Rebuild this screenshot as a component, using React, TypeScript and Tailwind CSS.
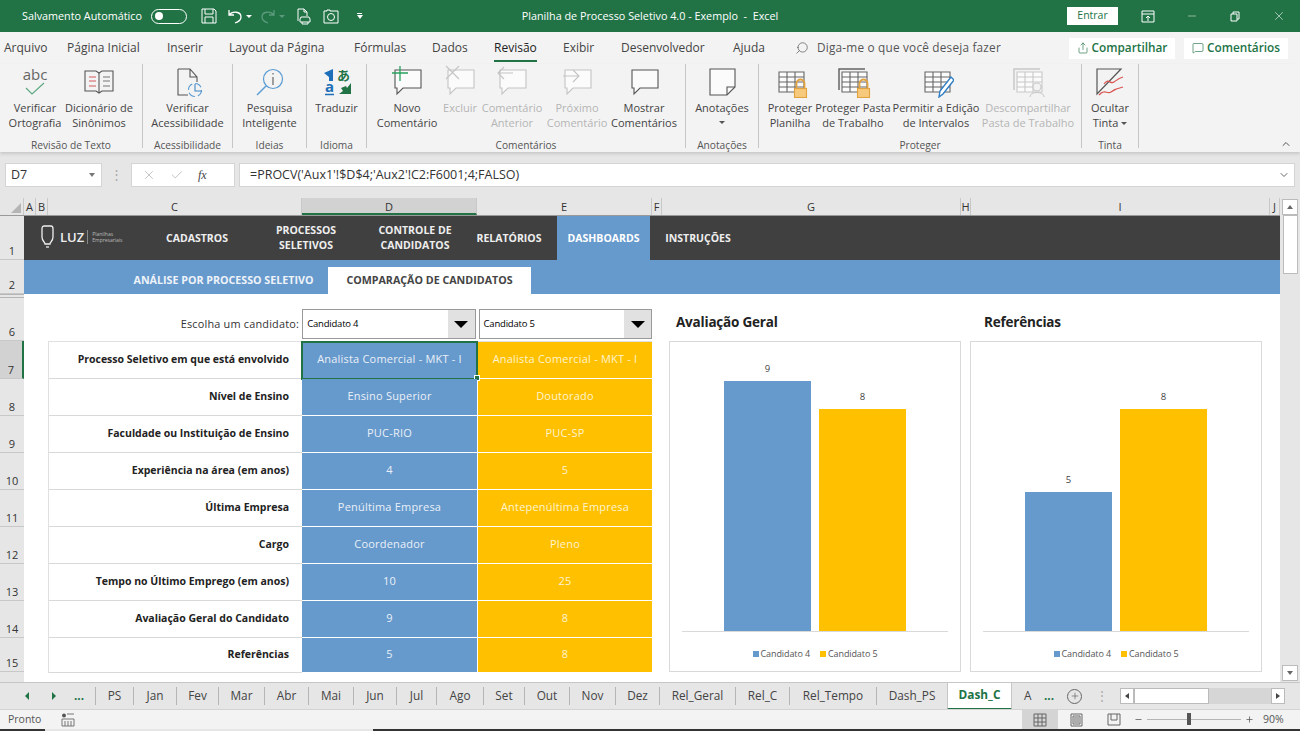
import { Search, Share, MessageSquare, X, Check, ChevronDown, ChevronUp, Minus, Plus } from "lucide-react";

const font = "font-['Open_Sans','Noto_Sans',sans-serif]";

// Title bar icons
function SaveIcon() {
  return (
    <svg width="16" height="16" viewBox="0 0 16 16" fill="none" stroke="#fff" strokeWidth="1"><path d="M1 1h12l2 2v12H1zM4 1v5h8V1M4 15v-6h8v6" /></svg>
  );
}

function UndoIcon({ color }: { color: string }) {
  return (
    <svg width="14" height="16" viewBox="0 0 14 16" fill="none" stroke={color} strokeWidth="1.3"><path d="M1 2v5h5M1 7c3-4 12-4 12 2 0 3-3 5-6 6" /></svg>
  );
}

function PreviewIcon() {
  return (
    <svg width="14" height="17" viewBox="0 0 14 17" fill="none" stroke="#fff" strokeWidth="1"><path d="M1 13V1h6l3 3v4M7 1v3h3M4 9h8l1 2v3H3v-3zM5 14v2h6v-2" /></svg>
  );
}

function CameraIcon() {
  return (
    <svg width="16" height="15" viewBox="0 0 16 15" fill="none" stroke="#fff" strokeWidth="1"><path d="M1 2h3V1h3v1h8v12H1z" /><circle cx="8" cy="8" r="3.500" /></svg>
  );
}

// Ribbon icons, all on the same 36x34 box
function AbcIcon() {
  return (
    <svg width="36" height="34" viewBox="0 0 36 34" fill="none">
      <text x="18" y="16" textAnchor="middle" fontSize="15" fill="#666" fontFamily="'Open Sans'">abc</text>
      <path d="M9 24l6 6L27 19" stroke="#5aa77f" strokeWidth="1.100" />
    </svg>
  );
}

function BookIcon() {
  return (
    <svg width="36" height="34" viewBox="0 0 36 34" fill="none" stroke="#555" strokeWidth="1.100">
      <path d="M4 7h11l3 2 3-2h11v20H21l-3 2-3-2H4z" />
      <path d="M18 9v20" />
      <path d="M8 13h7M8 17h7M8 22h7" stroke="#d15a5a" />
      <path d="M22 13h7M22 17h7M22 22h7" stroke="#777" />
    </svg>
  );
}

function AccessIcon() {
  return (
    <svg width="36" height="34" viewBox="0 0 36 34" fill="none" strokeWidth="1.100">
      <path d="M8 5h12l7 8v5M8 5v26h10M20 5v8h7" stroke="#555" />
      <circle cx="25" cy="26" r="6.500" stroke="#5a9bd4" strokeDasharray="7 3" />
      <path d="M25 20v7h7" stroke="#3f87c5" />
    </svg>
  );
}

function SmartIcon() {
  return (
    <svg width="36" height="34" viewBox="0 0 36 34" fill="none" stroke="#5a9bd4" strokeWidth="1.200">
      <circle cx="21" cy="15" r="9.500" />
      <path d="M14 22L5 31" strokeWidth="1.400" />
      <path d="M21 13v8M21 9v1.500" stroke="#666" />
    </svg>
  );
}

function TranslateIcon() {
  return (
    <svg width="36" height="34" viewBox="0 0 36 34">
      <path d="M5 9l9-4v12h-4v-4z" fill="#1c6fb8" />
      <text x="18" y="16" fontSize="13" fill="#217346" fontWeight="700" fontFamily="'Noto Sans CJK JP'">あ</text>
      <text x="6" y="28" fontSize="15" fontWeight="700" fill="#1c6fb8" fontFamily="'Open Sans'">a</text>
      <path d="M6 30.500h9" stroke="#1c6fb8" strokeWidth="1.500" />
      <path d="M32 19v11H20l4-3-2-3 5-2 1 2z" fill="#217346" />
    </svg>
  );
}

function BubbleIcon({ kind }: { kind: "new" | "del" | "prev" | "next" | "show" }) {
  const color = kind === "new" || kind === "show" ? "#555" : "#c4c4c4";
  return (
    <svg width="36" height="34" viewBox="0 0 36 34" fill="none" strokeWidth="1.100">
      <path d="M6 6h26v18H14l-6 6v-6H6z" stroke={color} fill="#fbfbfb" />
      {kind === "new" && <path d="M11 2v15M3 9h16" stroke="#27a35f" strokeWidth="1.300" />}
      {kind === "del" && <path d="M4 2l13 13M17 2L4 15" stroke="#c4c4c4" fill="none" />}
      {kind === "prev" && <path d="M19 9H5M10 3L4 9l6 6" stroke="#c4c4c4" />}
      {kind === "next" && <path d="M4 12h15M14 6l6 6-6 6" stroke="#c4c4c4" />}
    </svg>
  );
}

function NoteIcon() {
  return (
    <svg width="36" height="34" viewBox="0 0 36 34" fill="none" stroke="#555" strokeWidth="1.100">
      <path d="M6 5h25v18l-8 8H6z" fill="#fbfbfb" />
      <path d="M31 23h-8v8" />
    </svg>
  );
}

function SheetIcon({ lock, pen, user, stack }: { lock?: boolean; pen?: boolean; user?: boolean; stack?: boolean }) {
  const c = user ? "#c8c8c8" : "#666";
  return (
    <svg width="36" height="34" viewBox="0 0 36 34" fill="none" strokeWidth="1.100">
      {stack && <path d="M4 26V5h26" stroke={c} strokeWidth="1.500" />}
      <path d="M7 8h25v20H7z" stroke={c} fill="#fbfbfb" />
      <path d="M7 13h25M7 18h25M7 23h25M15 8v20M23 8v20" stroke={c} />
      {lock && (
        <g>
          <path d="M24.500 24v-4.500a4 4 0 018 0V24" stroke="#e2a33f" strokeWidth="1.800" />
          <rect x="22.500" y="24.500" width="12" height="9" fill="#f7c97c" stroke="#e2a33f" />
        </g>
      )}
      {pen && <path d="M21 33l1-6L33 13l3 3-11 14z" fill="#fff" stroke="#2f7fc7" strokeWidth="1.400" />}
      {user && (
        <g stroke="#c8c8c8" fill="#f3f3f3">
          <circle cx="27" cy="23" r="4" />
          <path d="M20 33c0-6 14-6 14 0" />
        </g>
      )}
    </svg>
  );
}

function InkIcon() {
  return (
    <svg width="36" height="34" viewBox="0 0 36 34" fill="none" strokeWidth="1.200">
      <path d="M5 5h24L5 30z" stroke="#555" />
      <path d="M12 20c5-7 6 1 10-2s5-4 9-5" stroke="#d9534f" />
      <path d="M7 31c6-7 8 0 12-3s7-4 12-5" stroke="#d9534f" />
    </svg>
  );
}

function Caret({ className }: { className?: string }) {
  return <span className={`inline-block h-0 w-0 border-x-[3px] border-t-[3px] border-x-transparent border-t-[#555] ${className ?? ""}`} />;
}

function RibbonButton({ icon, lines, w, off, caret }: { icon: React.ReactNode; lines: string[]; w: string; off?: boolean; caret?: "below" | "inline" }) {
  return (
    <div className={`${w} flex shrink-0 flex-col items-center`}>
      <div className="flex h-[34px] items-center justify-center">{icon}</div>
      <div className={`mt-[2px] text-center text-[11px] leading-[15px] whitespace-nowrap ${off ? "text-[#b5b5b5]" : "text-[#444]"}`}>
        {lines.map((l, i) => (
          <div key={l}>
            {l}
            {caret === "inline" && i === lines.length - 1 && <Caret className="mb-[2px] ml-[3px]" />}
          </div>
        ))}
        {caret === "below" && <div className="flex h-[15px] items-center justify-center"><Caret /></div>}
      </div>
    </div>
  );
}

function RibbonGroup({ label, w, children, pl }: { label: string; w: string; children: React.ReactNode; pl?: string }) {
  return (
    <div className={`${w} flex h-[84px] shrink-0 flex-col border-r border-[#c6c6c6]`}>
      <div className={`flex h-[74px] shrink-0 ${pl ?? "justify-center"}`}>{children}</div>
      <div className="text-center text-[10.200px] leading-[14px] text-[#555]">{label}</div>
    </div>
  );
}

const menuTabs = [
  { t: "Arquivo", w: "w-[63px]" },
  { t: "Página Inicial", w: "w-[100px]" },
  { t: "Inserir", w: "w-[62px]" },
  { t: "Layout da Página", w: "w-[125px]" },
  { t: "Fórmulas", w: "w-[78px]" },
  { t: "Dados", w: "w-[62px]" },
  { t: "Revisão", w: "w-[69px]", active: true },
  { t: "Exibir", w: "w-[58px]" },
  { t: "Desenvolvedor", w: "w-[112px]" },
  { t: "Ajuda", w: "w-[62px]" },
];

const columns = [
  { t: "A", w: "w-[12px]" },
  { t: "B", w: "w-[12px]" },
  { t: "C", w: "w-[254px]" },
  { t: "D", w: "w-[175px]", active: true },
  { t: "E", w: "w-[175px]" },
  { t: "F", w: "w-[10px]" },
  { t: "G", w: "w-[299px]" },
  { t: "H", w: "w-[10px]" },
  { t: "I", w: "w-[299px]" },
  { t: "J", w: "w-[10px]" },
];

const navItems = [
  { lines: ["CADASTROS"], w: "w-[106px]" },
  { lines: ["PROCESSOS", "SELETIVOS"], w: "w-[112px]" },
  { lines: ["CONTROLE DE", "CANDIDATOS"], w: "w-[106px]" },
  { lines: ["RELATÓRIOS"], w: "w-[82px]" },
  { lines: ["DASHBOARDS"], w: "ml-[7px] w-[93px]", active: true },
  { lines: ["INSTRUÇÕES"], w: "w-[96px]" },
];

const rows = [
  { label: "Processo Seletivo em que está envolvido", a: "Analista Comercial - MKT - I", b: "Analista Comercial - MKT - I", h: "h-[37px]", sel: true },
  { label: "Nível de Ensino", a: "Ensino Superior", b: "Doutorado", h: "h-[37px]" },
  { label: "Faculdade ou Instituição de Ensino", a: "PUC-RIO", b: "PUC-SP", h: "h-[37px]" },
  { label: "Experiência na área (em anos)", a: "4", b: "5", h: "h-[37px]" },
  { label: "Última Empresa", a: "Penúltima Empresa", b: "Antepenúltima Empresa", h: "h-[37px]" },
  { label: "Cargo", a: "Coordenador", b: "Pleno", h: "h-[37px]" },
  { label: "Tempo no Último Emprego (em anos)", a: "10", b: "25", h: "h-[37px]" },
  { label: "Avaliação Geral do Candidato", a: "9", b: "8", h: "h-[37px]" },
  { label: "Referências", a: "5", b: "8", h: "h-[35px]" },
];

const rowHeaders = [
  { t: "7", h: "h-[38px]", active: true },
  { t: "8", h: "h-[37px]" },
  { t: "9", h: "h-[37px]" },
  { t: "10", h: "h-[37px]" },
  { t: "11", h: "h-[37px]" },
  { t: "12", h: "h-[37px]" },
  { t: "13", h: "h-[37px]" },
  { t: "14", h: "h-[37px]" },
  { t: "15", h: "h-[34px]" },
];

const sheetTabs = [
  { t: "PS", w: "w-[38px]" },
  { t: "Jan", w: "w-[43px]" },
  { t: "Fev", w: "w-[42px]" },
  { t: "Mar", w: "w-[46px]" },
  { t: "Abr", w: "w-[44px]" },
  { t: "Mai", w: "w-[45px]" },
  { t: "Jun", w: "w-[43px]" },
  { t: "Jul", w: "w-[40px]" },
  { t: "Ago", w: "w-[47px]" },
  { t: "Set", w: "w-[41px]" },
  { t: "Out", w: "w-[45px]" },
  { t: "Nov", w: "w-[46px]" },
  { t: "Dez", w: "w-[44px]" },
  { t: "Rel_Geral", w: "w-[76px]" },
  { t: "Rel_C", w: "w-[54px]" },
  { t: "Rel_Tempo", w: "w-[87px]" },
  { t: "Dash_PS", w: "w-[71px]" },
];

function RowHead({ t, h, active }: { t: string; h: string; active?: boolean }) {
  return (
    <div className={`${h} flex items-end justify-center border-b border-[#c8c8c8] text-[11px] leading-[16px] text-[#333] ${active ? "border-r-2 border-r-[#217346] bg-[#d2d2d2]" : ""}`}>
      {t}
    </div>
  );
}

function Dropdown({ value }: { value: string }) {
  return (
    <div className="flex h-[30px] w-[174px] items-center border border-[#999] bg-white pl-[4px] text-[9.500px] tracking-[-0.2px] text-black">
      <span className="flex-1">{value}</span>
      <div className="flex h-full w-[27px] items-center justify-center bg-[#e1e1e1]">
        <div className="h-0 w-0 border-x-[7px] border-t-[7px] border-x-transparent border-t-black" />
      </div>
    </div>
  );
}

function Chart({ title, values, pl }: { title: string; values: number[]; pl: string }) {
  const colors = ["bg-[#6699cc]", "bg-[#ffc000]"];
  return (
    <div className="flex w-[292px] flex-col">
      <div className={`flex h-[47px] items-center pt-[9px] ${pl} text-[13.500px] font-bold tracking-[-0.2px] text-[#222]`}>{title}</div>
      <div className="flex h-[331px] flex-col border border-[#d9d9d9]">
        <div className="mx-[12px] flex flex-1 items-end justify-center gap-[8px] border-b border-[#d9d9d9]">
          {values.map((v, i) => (
            <div key={i} className="flex w-[87px] flex-col items-center">
              <span className="mb-[6px] text-[9.500px] leading-[12px] text-[#444]">{v}</span>
              <div className={`w-full ${colors[i]}`} style={{ height: Math.round(v * 27.8) }} />
            </div>
          ))}
        </div>
        <div className="flex h-[39px] items-center justify-center gap-[10px] pt-[5px] text-[9px] tracking-[-0.1px] text-[#555]">
          <span className="flex items-center gap-[2px]"><i className="h-[6px] w-[6px] bg-[#6699cc]" />Candidato 4</span>
          <span className="flex items-center gap-[2px]"><i className="h-[6px] w-[6px] bg-[#ffc000]" />Candidato 5</span>
        </div>
      </div>
    </div>
  );
}

export default function App() {
  return (
    <div className={`${font} flex h-[731px] w-[1300px] flex-col overflow-hidden bg-[#e6e6e6]`}>
      {/* Title bar */}
      <div className="flex h-[32px] shrink-0 items-center bg-[#217346] text-white">
        <div className="flex flex-1 basis-0 items-center pl-[22px] text-[10.800px]">
          <span className="whitespace-nowrap">Salvamento Automático</span>
          <div className="ml-[9px] flex h-[15px] w-[36px] shrink-0 items-center rounded-full border border-white pl-[3px]">
            <div className="h-[8px] w-[8px] rounded-full bg-white" />
          </div>
          <div className="ml-[14px]"><SaveIcon /></div>
          <div className="ml-[11px]"><UndoIcon color="#fff" /></div>
          <div className="ml-[4px] h-0 w-0 border-x-[3px] border-t-[3px] border-x-transparent border-t-white" />
          <div className="ml-[9px] -scale-x-100"><UndoIcon color="#5c9a7c" /></div>
          <div className="ml-[4px] h-0 w-0 border-x-[3px] border-t-[3px] border-x-transparent border-t-[#5c9a7c]" />
          <div className="ml-[12px]"><PreviewIcon /></div>
          <div className="ml-[12px]"><CameraIcon /></div>
          <div className="ml-[18px] flex flex-col items-center">
            <div className="mb-[1px] h-[1px] w-[5px] bg-white" />
            <div className="h-0 w-0 border-x-[3px] border-t-[4px] border-x-transparent border-t-white" />
          </div>
        </div>
        <div className="mr-[8px] text-[10.800px] whitespace-nowrap">Planilha de Processo Seletivo 4.0 - Exemplo&nbsp; -&nbsp; Excel</div>
        <div className="flex flex-1 basis-0 items-center justify-end pr-[14px]">
          <div className="flex h-[18px] w-[51px] items-center justify-center bg-white text-[10.500px] text-[#217346]">Entrar</div>
          <svg className="ml-[23px]" width="14" height="13" viewBox="0 0 14 13" fill="none" stroke="#fff"><path d="M1 1h12v11H1zM1 4h12M7 11V6M5 8l2-2 2 2" /></svg>
          <Minus className="ml-[31px]" size={12} strokeWidth={1} />
          <svg className="ml-[32px]" width="10" height="11" viewBox="0 0 10 11" fill="none" stroke="#fff"><path d="M1 3h6v7H1zM3 3V1h6v7H7" /></svg>
          <X className="ml-[32px]" size={14} strokeWidth={1} />
        </div>
      </div>

      {/* Menu tabs */}
      <div className="flex h-[32px] shrink-0 items-center bg-[#f3f3f3] pl-[4px] text-[12px] text-[#444]">
        {menuTabs.map((m) => (
          <div key={m.t} className={`${m.w} shrink-0 whitespace-nowrap`}>
            <span className={`relative inline-block leading-[32px] ${m.active ? "text-[#222]" : ""}`}>
              {m.t}
              {m.active && <span className="absolute bottom-[2px] left-0 h-[2px] w-full bg-[#217346]" />}
            </span>
          </div>
        ))}
        <Search className="-scale-x-100 text-[#555]" size={14} strokeWidth={1.2} />
        <span className="ml-[8px] whitespace-nowrap text-[11.800px] tracking-[0.2px] text-[#555]">Diga-me o que você deseja fazer</span>
        <div className="ml-auto flex items-center gap-[9px] pr-[12px] text-[#217346]">
          <div className="flex h-[21px] w-[106px] items-center justify-center gap-[3px] bg-white text-[11.800px] font-semibold">
            <Share size={12} strokeWidth={1.3} />Compartilhar
          </div>
          <div className="flex h-[21px] w-[104px] items-center justify-center gap-[3px] bg-white text-[11.800px] font-semibold">
            <MessageSquare size={12} strokeWidth={1.3} />Comentários
          </div>
        </div>
      </div>

      {/* Ribbon */}
      <div className="flex h-[88px] shrink-0 bg-[#f3f3f3] shadow-[0_2px_3px_#c8c8c8]">
        <RibbonGroup label="Revisão de Texto" w="w-[143px]" pl="pl-[4px]">
          <RibbonButton w="w-[62px]" icon={<AbcIcon />} lines={["Verificar", "Ortografia"]} />
          <RibbonButton w="w-[66px]" icon={<BookIcon />} lines={["Dicionário de", "Sinônimos"]} />
        </RibbonGroup>
        <RibbonGroup label="Acessibilidade" w="w-[90px]">
          <RibbonButton w="w-[80px]" icon={<AccessIcon />} lines={["Verificar", "Acessibilidade"]} />
        </RibbonGroup>
        <RibbonGroup label="Ideias" w="w-[74px]">
          <RibbonButton w="w-[70px]" icon={<SmartIcon />} lines={["Pesquisa", "Inteligente"]} />
        </RibbonGroup>
        <RibbonGroup label="Idioma" w="w-[60px]">
          <RibbonButton w="w-[56px]" icon={<TranslateIcon />} lines={["Traduzir"]} />
        </RibbonGroup>
        <RibbonGroup label="Comentários" w="w-[319px]" pl="pl-[5px]">
          <RibbonButton w="w-[70px]" icon={<BubbleIcon kind="new" />} lines={["Novo", "Comentário"]} />
          <RibbonButton w="w-[36px]" off icon={<BubbleIcon kind="del" />} lines={["Excluir"]} />
          <RibbonButton w="w-[68px]" off icon={<BubbleIcon kind="prev" />} lines={["Comentário", "Anterior"]} />
          <RibbonButton w="w-[62px]" off icon={<BubbleIcon kind="next" />} lines={["Próximo", "Comentário"]} />
          <RibbonButton w="w-[72px]" icon={<BubbleIcon kind="show" />} lines={["Mostrar", "Comentários"]} />
        </RibbonGroup>
        <RibbonGroup label="Anotações" w="w-[73px]">
          <RibbonButton w="w-[70px]" caret="below" icon={<NoteIcon />} lines={["Anotações"]} />
        </RibbonGroup>
        <RibbonGroup label="Proteger" w="w-[323px]" pl="pl-[3px]">
          <RibbonButton w="w-[56px]" icon={<SheetIcon lock />} lines={["Proteger", "Planilha"]} />
          <RibbonButton w="w-[70px]" icon={<SheetIcon lock stack />} lines={["Proteger Pasta", "de Trabalho"]} />
          <RibbonButton w="w-[96px]" icon={<SheetIcon pen />} lines={["Permitir a Edição", "de Intervalos"]} />
          <RibbonButton w="w-[88px]" off icon={<SheetIcon user stack />} lines={["Descompartilhar", "Pasta de Trabalho"]} />
        </RibbonGroup>
        <RibbonGroup label="Tinta" w="w-[57px]">
          <RibbonButton w="w-[52px]" caret="inline" icon={<InkIcon />} lines={["Ocultar", "Tinta"]} />
        </RibbonGroup>
        <div className="ml-auto flex items-end pr-[8px] pb-[2px] text-[#555]">
          <ChevronUp size={12} strokeWidth={2} />
        </div>
      </div>

      {/* Formula bar */}
      <div className="flex h-[46px] shrink-0 items-center pl-[5px] text-[12.500px] text-[#333]">
        <div className="flex h-[24px] w-[97px] items-center justify-between border border-[#d4d4d4] bg-white pr-[6px] pl-[5px]">
          D7
          <div className="h-0 w-0 border-x-[3px] border-t-[4px] border-x-transparent border-t-[#777]" />
        </div>
        <div className="flex w-[29px] justify-center text-[#aaa]">⋮</div>
        <div className="flex h-[24px] w-[104px] items-center gap-[14px] border border-[#d4d4d4] bg-white pl-[10px]">
          <X size={14} strokeWidth={1.2} className="text-[#aaa]" />
          <Check size={14} strokeWidth={1.2} className="text-[#aaa]" />
          <span className="font-['Liberation_Serif',serif] text-[12px] text-[#444] italic">fx</span>
        </div>
        <div className="ml-[4px] flex h-[24px] w-[1056px] items-center justify-between border border-[#d4d4d4] bg-white pr-[4px] pl-[10px]">
          =PROCV('Aux1'!$D$4;'Aux2'!C2:F6001;4;FALSO)
          <ChevronDown size={12} className="text-[#666]" />
        </div>
      </div>

      {/* Sheet */}
      <div className="flex h-[484px] shrink-0 bg-[#e6e6e6]">
        <div className="flex w-[1280px] flex-col">
          {/* Column headers */}
          <div className="flex h-[18px] shrink-0 border-b border-[#999] text-[11px] leading-[17px] text-[#333]">
            <div className="flex w-[24px] items-end justify-end border-r border-[#c8c8c8] p-[2px]">
              <div className="h-0 w-0 border-b-[10px] border-l-[10px] border-b-[#b5b5b5] border-l-transparent" />
            </div>
            {columns.map((c) => (
              <div key={c.t} className={`${c.w} border-r border-[#c8c8c8] text-center ${c.active ? "border-b-2 border-b-[#217346] bg-[#d2d2d2]" : ""}`}>
                {c.t}
              </div>
            ))}
          </div>

          {/* Rows 1 and 2 */}
          <div className="flex h-[44px] shrink-0">
            <div className="w-[24px]"><RowHead t="1" h="h-[44px]" /></div>
            <div className="flex flex-1 items-stretch bg-[#404040] text-[10.500px] leading-[15px] font-bold text-[#eee]">
              <div className="flex w-[120px] items-center pb-[2px] pl-[17px]">
                <svg width="13" height="25" viewBox="0 0 13 25" fill="none" stroke="#eee" strokeWidth="1.300">
                  <path d="M3 1h7c2 0 2 2 2 3v8c0 4-3 5-3 7H4c0-2-3-3-3-7V4c0-1 0-3 2-3z" />
                  <path d="M5 22h3" />
                </svg>
                <span className="ml-[6px] text-[13px] font-semibold">LUZ</span>
                <span className="ml-[3px] h-[14px] w-px bg-[#888]" />
                <span className="ml-[4px] text-[5px] leading-[6px] font-normal whitespace-nowrap text-[#bbb]">Planilhas<br />Empresariais</span>
              </div>
              {navItems.map((n) => (
                <div key={n.lines[0]} className={`${n.w} flex flex-col items-center justify-center whitespace-nowrap ${n.active ? "bg-[#6699cc] text-white" : ""}`}>
                  {n.lines.map((l) => (
                    <div key={l}>{l}</div>
                  ))}
                </div>
              ))}
            </div>
          </div>
          <div className="flex h-[34px] shrink-0">
            <div className="w-[24px]"><RowHead t="2" h="h-[34px]" /></div>
            <div className="flex flex-1 items-end bg-[#6699cc] pl-[95px] text-[10.700px] font-bold">
              <div className="flex h-[27px] w-[209px] items-center justify-center whitespace-nowrap text-[#eef3f9]">ANÁLISE POR PROCESSO SELETIVO</div>
              <div className="flex h-[27px] w-[203px] items-center justify-center whitespace-nowrap bg-white text-[#444]">COMPARAÇÃO DE CANDIDATOS</div>
            </div>
          </div>

          {/* Body */}
          <div className="flex min-h-0 flex-1">
            <div className="flex w-[24px] flex-col">
              {/* rows 3 to 5 are hidden, so row 6 starts with the double line */}
              <div className="h-[4px] border-y border-[#b5b5b5]" />
              <RowHead t="6" h="h-[43px]" />
              {rowHeaders.map((r) => (
                <RowHead key={r.t} t={r.t} h={r.h} active={r.active} />
              ))}
              <div className="flex-1" />
            </div>
            <div className="flex flex-1 bg-white pl-[24px]">
              <div className="flex w-[604px] shrink-0 flex-col">
                <div className="flex h-[47px] items-end pb-[2px]">
                  <div className="flex h-[30px] w-[255px] items-center justify-end pr-[3px] text-[10.900px] tracking-[0.2px] text-[#333]">Escolha um candidato:</div>
                  <Dropdown value="Candidato 4" />
                  <div className="w-[3px]" />
                  <Dropdown value="Candidato 5" />
                </div>
                <div className="flex flex-col border-t border-l border-[#e0e0e0]">
                  {rows.map((r) => (
                    <div key={r.label} className={`${r.h} flex text-[10.500px]`}>
                      <div className="flex w-[253px] items-center justify-end border-b border-[#d9d9d9] pr-[13px] font-bold whitespace-nowrap text-[#222]">{r.label}</div>
                      <div className={`relative flex w-[175px] items-center justify-center border-b border-[#fff] bg-[#6699cc] pb-[1px] text-[11px] tracking-[0.2px] text-[#eaf0f7] ${r.sel ? "outline-2 -outline-offset-1 outline-[#217346]" : ""}`}>
                        {r.a}
                        {r.sel && <span className="absolute -right-[3px] -bottom-[3px] h-[6px] w-[6px] border border-white bg-[#217346]" />}
                      </div>
                      <div className="ml-px flex w-[174px] items-center justify-center border-b border-[#fff] bg-[#ffc000] pb-[1px] text-[11px] tracking-[0.2px] text-[#fff3d0]">{r.b}</div>
                    </div>
                  ))}
                </div>
              </div>
              <div className="ml-[17px] flex gap-[9px]">
                <Chart title="Avaliação Geral" values={[9, 8]} pl="pl-[7px]" />
                <Chart title="Referências" values={[5, 8]} pl="pl-[14px]" />
              </div>
            </div>
          </div>
        </div>

        {/* Vertical scrollbar */}
        <div className="flex w-[20px] flex-col items-center pt-[1px]">
          <div className="flex h-[16px] w-[16px] items-center justify-center border border-[#bbb] bg-white">
            <div className="h-0 w-0 border-x-[3px] border-b-[4px] border-x-transparent border-b-[#666]" />
          </div>
          <div className="h-[59px] w-[15px] border border-[#bbb] bg-white" />
          <div className="flex-1" />
          <div className="mb-[1px] flex h-[16px] w-[16px] items-center justify-center border border-[#bbb] bg-white">
            <div className="h-0 w-0 border-x-[3px] border-t-[4px] border-x-transparent border-t-[#666]" />
          </div>
        </div>
      </div>

      {/* Sheet tabs */}
      <div className="flex h-[27px] shrink-0 items-center border-t border-[#c6c6c6] bg-[#e6e6e6] text-[11.800px] text-[#444]">
        <div className="flex w-[95px] shrink-0 items-center pl-[25px] text-[#217346]">
          <div className="h-0 w-0 border-y-[4px] border-r-[4px] border-y-transparent border-r-[#217346]" />
          <div className="ml-[23px] h-0 w-0 border-y-[4px] border-l-[4px] border-y-transparent border-l-[#217346]" />
          <span className="ml-[18px] font-bold">...</span>
        </div>
        {sheetTabs.map((s) => (
          <div key={s.t} className={`${s.w} flex h-[18px] shrink-0 items-center justify-center border-l border-[#b5b5b5]`}>{s.t}</div>
        ))}
        <div className="flex h-[27px] w-[65px] shrink-0 items-center justify-center border-x border-b-2 border-[#217346] border-x-[#c6c6c6] bg-white font-bold text-[#217346]">Dash_C</div>
        <div className="ml-[12px] w-[12px]">A</div>
        <span className="ml-[8px] font-bold text-[#217346]">...</span>
        <div className="ml-[13px] flex h-[15px] w-[15px] items-center justify-center rounded-full border border-[#666]">
          <Plus size={10} strokeWidth={1.3} />
        </div>
        <span className="ml-[14px] text-[#aaa]">⋮</span>
        <div className="ml-[12px] flex h-[16px] w-[165px] items-center bg-[#d6d6d6]">
          <div className="flex h-full w-[14px] items-center justify-center border border-[#bbb] bg-white">
            <div className="h-0 w-0 border-y-[3px] border-r-[4px] border-y-transparent border-r-[#444]" />
          </div>
          <div className="h-full w-[75px] border border-[#bbb] bg-white" />
          <div className="ml-auto flex h-full w-[14px] items-center justify-center border border-[#bbb] bg-white">
            <div className="h-0 w-0 border-y-[3px] border-l-[4px] border-y-transparent border-l-[#444]" />
          </div>
        </div>
      </div>

      {/* Status bar */}
      <div className="flex h-[20px] shrink-0 items-center border-t border-[#d4d4d4] bg-[#f3f3f3] pl-[8px] text-[10.500px] text-[#555]">
        <span className="w-[53px]">Pronto</span>
        <svg width="14" height="14" viewBox="0 0 14 14" fill="none" stroke="#777"><circle cx="3" cy="2.500" r="2" fill="#555" stroke="none" /><path d="M6 1h7M1 6h12v7H1zM4 8v5M7 8v5M10 8v5" /></svg>
        <div className="ml-[947px] flex h-full w-[36px] items-center justify-center bg-[#d4d4d4]">
          <svg width="14" height="14" viewBox="0 0 14 14" fill="none" stroke="#666"><path d="M1 1h12v12H1zM1 5h12M1 9h12M5 1v12M9 1v12" /></svg>
        </div>
        <div className="flex w-[37px] justify-center">
          <svg width="13" height="14" viewBox="0 0 13 14" fill="none" stroke="#666"><path d="M1 1h11v12H1zM3 3h7v8H3zM4 5h5M4 7h5M4 9h5" /></svg>
        </div>
        <div className="flex w-[37px] justify-center">
          <svg width="14" height="13" viewBox="0 0 14 13" fill="none" stroke="#666"><path d="M1 1v11h12V1M4 1v6h6V1M1 1h12" /></svg>
        </div>
        <Minus size={9} strokeWidth={2} className="ml-[2px]" />
        <div className="relative mx-[4px] h-px w-[94px] bg-[#b5b5b5]">
          <span className="absolute top-[-6px] left-[40px] h-[12px] w-[4px] bg-[#555]" />
        </div>
        <Plus size={9} strokeWidth={2} />
        <span className="ml-[9px]">90%</span>
      </div>

      {/* Desktop strip below the window */}
      <div className="flex h-[2px] shrink-0 bg-[#333]">
        <div className="ml-[45px] w-[328px] bg-[#e6e6e6]" />
      </div>
    </div>
  );
}
